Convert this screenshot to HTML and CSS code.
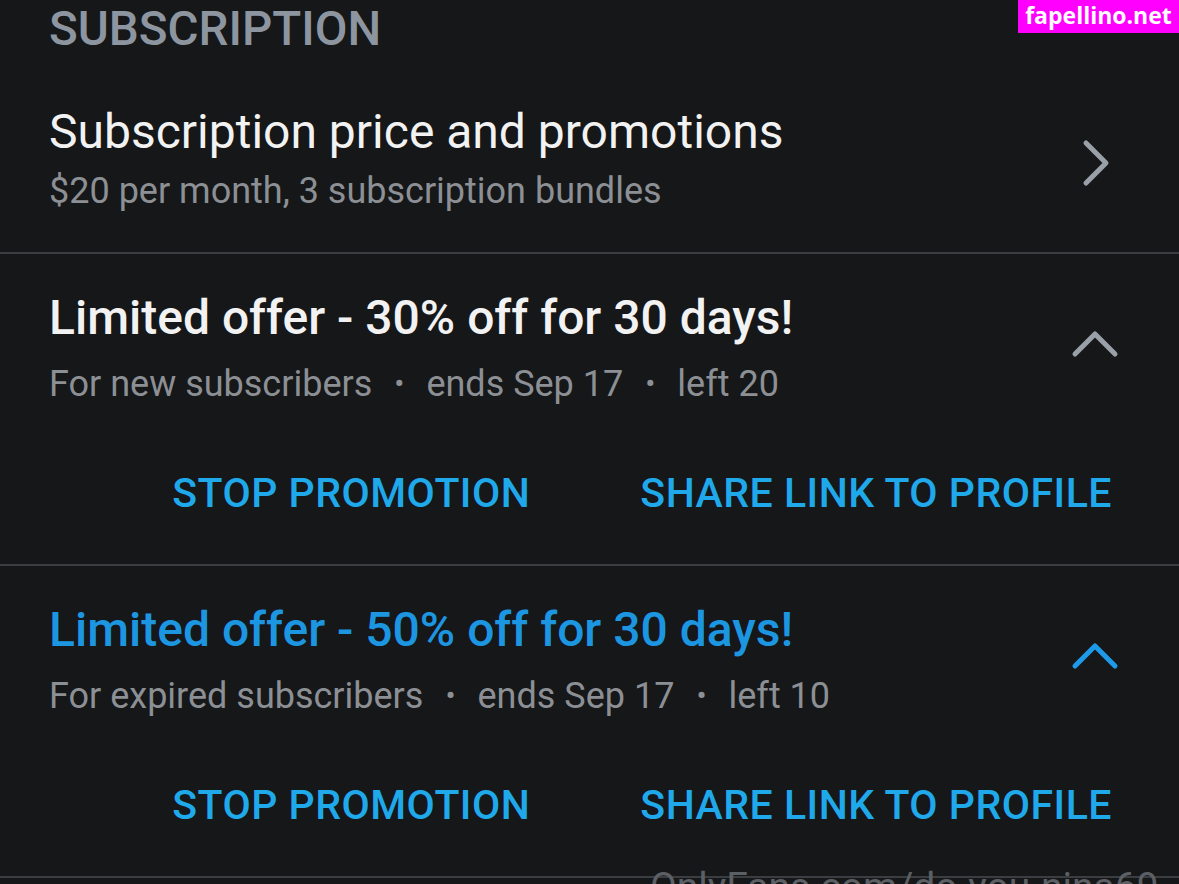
FILE: index.html
```html
<!DOCTYPE html>
<html>
<head>
<meta charset="utf-8">
<link rel="stylesheet" href="styles.css">
</head>
<body>
<div class="page">
  <div class="section-head">SUBSCRIPTION</div>

  <div class="row-link">
    <div class="text-col">
      <div class="title">Subscription price and promotions</div>
      <div class="sub">$20 per month, 3 subscription bundles</div>
    </div>
    <svg class="chev-right" width="30" height="48" viewBox="0 0 30 48"><path d="M5 4 L25 24 L5 44" fill="none" stroke="#9aa0a8" stroke-width="5" stroke-linecap="round" stroke-linejoin="round"/></svg>
  </div>

  <div class="divider"></div>

  <div class="promo">
    <div class="promo-top">
      <div class="text-col">
        <div class="title medium">Limited offer - 30% off for 30 days!</div>
        <div class="sub">For new subscribers<span class="dot">•</span>ends Sep 17<span class="dot">•</span>left 20</div>
      </div>
      <svg class="chev-up" width="48" height="30" viewBox="0 0 48 30"><path d="M4 26 L24 6 L44 26" fill="none" stroke="#9aa0a8" stroke-width="5" stroke-linecap="round" stroke-linejoin="round"/></svg>
    </div>
    <div class="actions">
      <span class="btn">STOP PROMOTION</span>
      <span class="btn">SHARE LINK TO PROFILE</span>
    </div>
  </div>

  <div class="divider"></div>

  <div class="promo">
    <div class="promo-top">
      <div class="text-col">
        <div class="title medium blue">Limited offer - 50% off for 30 days!</div>
        <div class="sub">For expired subscribers<span class="dot">•</span>ends Sep 17<span class="dot">•</span>left 10</div>
      </div>
      <svg class="chev-up" width="48" height="30" viewBox="0 0 48 30"><path d="M4 26 L24 6 L44 26" fill="none" stroke="#1e9be8" stroke-width="5" stroke-linecap="round" stroke-linejoin="round"/></svg>
    </div>
    <div class="actions">
      <span class="btn">STOP PROMOTION</span>
      <span class="btn">SHARE LINK TO PROFILE</span>
    </div>
  </div>

  <div class="divider"></div>

  <div class="badge">fapellino.net</div>
  <div class="wm">OnlyFans.com/do-you-nina69</div>
</div>
</body>
</html>
```

FILE: styles.css
```css
html, body {
  margin: 0;
  padding: 0;
  background: #161719;
}
.page {
  position: relative;
  width: 1179px;
  height: 884px;
  overflow: hidden;
  font-family: Roboto, "Noto Sans", sans-serif;
  background: #161719;
}
.section-head {
  padding: 1px 0 0 49px;
  height: 56px;
  line-height: 56px;
  font-size: 47.5px;
  font-weight: 500;
  color: #8d96a0;
}
.row-link {
  display: flex;
  align-items: center;
  justify-content: space-between;
  padding: 47px 68px 39px 49px;
}
.text-col {
  display: flex;
  flex-direction: column;
}
.title {
  font-size: 48px;
  line-height: 56px;
  color: #f2f2f2;
}
.row-link .sub {
  margin-top: 9px;
}
.medium {
  font-weight: 500;
}
.blue {
  color: #1d96e2;
}
.sub {
  font-size: 36px;
  line-height: 44px;
  color: #8c9095;
}
.dot {
  display: inline-block;
  font-size: 30px;
  margin: 0 22px;
  vertical-align: 2px;
}
.chev-right {
  margin-top: 8px;
}
.divider {
  height: 2px;
  background: #3a3d41;
}
.promo {
  padding: 36px 0 47px 49px;
  display: flex;
  flex-direction: column;
}
.promo-top {
  display: flex;
  align-items: center;
  justify-content: space-between;
  padding-right: 60px;
}
.promo .sub {
  margin-top: 16px;
}
.chev-up {
  margin-bottom: 10px;
}
.actions {
  display: flex;
  justify-content: flex-end;
  gap: 110px;
  padding-right: 67px;
  margin-top: 63px;
}
.btn {
  font-size: 41px;
  line-height: 48px;
  font-weight: 500;
  letter-spacing: 0.5px;
  color: #1fa9ea;
}
.badge {
  position: absolute;
  top: 0;
  right: 0;
  width: 161px;
  height: 33px;
  background: #ff00ff;
  color: #ffffff;
  font-family: "Open Sans", sans-serif;
  font-weight: 700;
  font-size: 23px;
  line-height: 31px;
  text-align: center;
}
.wm {
  position: absolute;
  left: 650px;
  top: 863px;
  font-size: 39px;
  line-height: 48px;
  color: #5c5f63;
  white-space: nowrap;
}
```
